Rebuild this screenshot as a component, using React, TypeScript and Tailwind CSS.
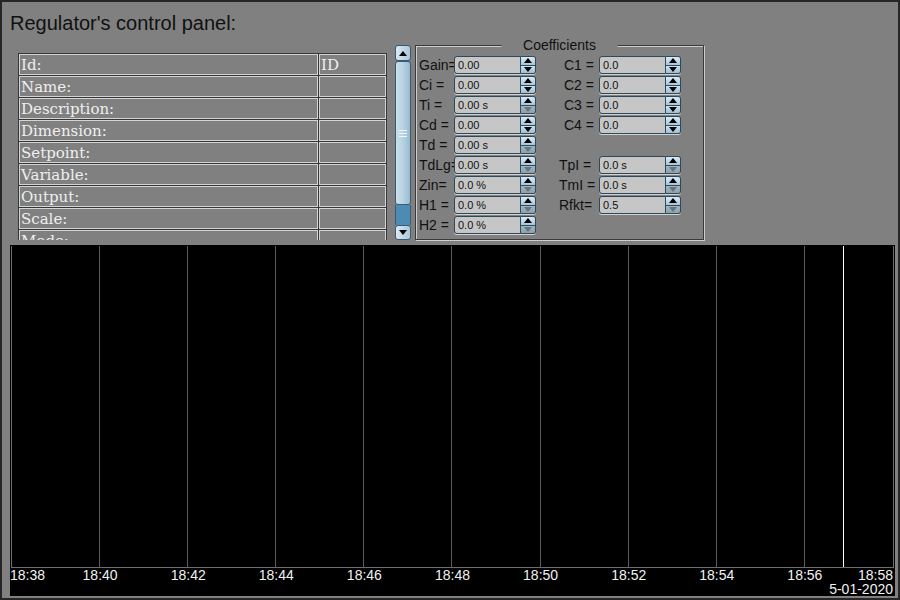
import React from "react";

const fields = ["Id:", "Name:", "Description:", "Dimension:", "Setpoint:", "Variable:", "Output:", "Scale:", "Mode:", "Status:"];

type Row = {
  l: string;
  lv: string;
  lOff?: boolean;
  r?: string;
  rv?: string;
  rOff?: boolean;
  rShift?: boolean;
};

const coeffs: Row[] = [
  { l: "Gain=", lv: "0.00", r: "C1 =", rv: "0.0" },
  { l: "Ci =", lv: "0.00", r: "C2 =", rv: "0.0" },
  { l: "Ti =", lv: "0.00 s", lOff: true, r: "C3 =", rv: "0.0" },
  { l: "Cd =", lv: "0.00", r: "C4 =", rv: "0.0" },
  { l: "Td =", lv: "0.00 s", lOff: true },
  { l: "TdLg=", lv: "0.00 s", lOff: true, r: "TpI =", rv: "0.0 s", rOff: true, rShift: true },
  { l: "Zin=", lv: "0.0 %", lOff: true, r: "TmI =", rv: "0.0 s", rOff: true, rShift: true },
  { l: "H1 =", lv: "0.0 %", lOff: true, r: "Rfkt=", rv: "0.5", rOff: true, rShift: true },
  { l: "H2 =", lv: "0.0 %", lOff: true },
];

const times = ["18:38", "18:40", "18:42", "18:44", "18:46", "18:48", "18:50", "18:52", "18:54", "18:56"];

function Tri({ up, color }: { up?: boolean; color: string }) {
  return (
    <svg width="8" height="5" viewBox="0 0 8 5" className="block">
      <polygon points={up ? "0,5 4,0 8,5" : "0,0 8,0 4,5"} fill={color} />
    </svg>
  );
}

function Spin({ value, downOff }: { value: string; downOff?: boolean }) {
  return (
    <div className="relative flex h-[18px] w-[82px] rounded-[3px] shadow-[0_1px_0_#d2d2d2]">
      <div className="flex flex-1 items-center rounded-l-[3px] border border-[#2c4a5b] bg-[#c6c6c6] pl-[3px] text-[11px] leading-none text-[#111]">
        {value}
      </div>
      <div className="flex w-[15px] flex-col overflow-hidden rounded-r-[3px] border border-l-0 border-[#2c4a5b]">
        <div className="flex flex-1 items-center justify-center border-b border-[#2c4a5b] bg-gradient-to-b from-[#dcebf4] to-[#a6c6da]">
          <Tri up color="#000" />
        </div>
        {downOff ? (
          <div className="flex flex-1 items-center justify-center bg-gradient-to-b from-[#a4b6c0] to-[#8ba1ad]">
            <Tri color="#66747c" />
          </div>
        ) : (
          <div className="flex flex-1 items-center justify-center bg-gradient-to-b from-[#cfe3ef] to-[#9dbfd4]">
            <Tri color="#000" />
          </div>
        )}
      </div>
    </div>
  );
}

function ScrollBar() {
  return (
    <div className="flex h-full w-[16px] flex-col">
      <div className="flex h-[16px] items-center justify-center rounded-[3px] border border-[#3a5b6f] bg-gradient-to-r from-[#dbeaf3] to-[#a8c8dc]">
        <Tri up color="#000" />
      </div>
      <div className="flex flex-1 flex-col">
        <div className="flex h-[144px] items-center justify-center rounded-[3px] border border-[#3a5b6f] bg-gradient-to-r from-[#c9dfeb] via-[#b7d2e2] to-[#98bbd1]">
          <div className="flex w-[8px] flex-col gap-[2px]">
            <div className="h-px bg-[#f4f8fb]" />
            <div className="h-px bg-[#f4f8fb]" />
            <div className="h-px bg-[#f4f8fb]" />
          </div>
        </div>
        <div className="flex-1 border-x border-[#3a5b6f] bg-[#4c8bb3]" />
      </div>
      <div className="flex h-[15px] items-center justify-center rounded-[3px] border border-[#3a5b6f] bg-gradient-to-r from-[#dbeaf3] to-[#a8c8dc]">
        <Tri color="#000" />
      </div>
    </div>
  );
}

export default function App() {
  return (
    <div className="flex h-[600px] w-[900px] flex-col border-2 border-[#262626] bg-[#808080] font-['Liberation_Sans',Arial,sans-serif]">
      <div className="pl-[8px] pt-[10px] text-[20px] leading-[23px] text-[#111]">Regulator's control panel:</div>

      <div className="ml-[16px] mt-[10px] flex h-[195px] shrink-0">
        <div className="h-full w-[369px] overflow-hidden pt-[8px]">
          <div className="flex flex-col gap-px bg-[#363636] p-px font-['DejaVu_Serif',serif] text-[15px] leading-[20px] text-[#efefef]">
            {fields.map((f, i) => (
              <div key={f} className="flex gap-px">
                <div className="h-[21px] w-[299px] border border-[#d4d4d4] bg-[#808080] pl-px">{f}</div>
                <div className="h-[21px] w-[67px] border border-[#d4d4d4] bg-[#808080] pl-px">{i === 0 ? "ID" : ""}</div>
              </div>
            ))}
          </div>
        </div>

        <div className="ml-[8px] h-full">
          <ScrollBar />
        </div>

        <div className="relative ml-[4px] h-[195px] w-[289px] border border-[#3a3a3a] pl-[3px] pt-[10px] shadow-[inset_1px_1px_0_#cdcdcd,1px_1px_0_#cdcdcd]">
          <span className="absolute -top-[9px] left-1/2 -translate-x-1/2 bg-[#808080] px-[22px] text-[14px] leading-[16px] text-[#111]">
            Coefficients
          </span>
          <div className="flex flex-col gap-[2px] text-[14px] text-[#111]">
            {coeffs.map((c) => (
              <div key={c.l} className="flex h-[18px] items-center">
                <span className="w-[35px] whitespace-nowrap leading-[18px]">{c.l}</span>
                <Spin value={c.lv} downOff={c.lOff} />
                {c.r ? (
                  <>
                    <span className={c.rShift ? "ml-[23px] w-[40px] whitespace-nowrap leading-[18px]" : "ml-[28px] w-[35px] whitespace-nowrap leading-[18px]"}>
                      {c.r}
                    </span>
                    <Spin value={c.rv ?? ""} downOff={c.rOff} />
                  </>
                ) : null}
              </div>
            ))}
          </div>
        </div>
      </div>

      <div className="ml-[8px] mt-[5px] flex h-[351px] w-[885px] shrink-0 flex-col bg-black px-px pt-px">
        <div className="relative grid h-[322px] shrink-0 grid-cols-10 border-x border-b border-[#6e6e6e]">
          {times.map((t, i) => (
            <div key={t} className={i < 9 ? "border-r border-[#5c5c5c]" : ""} />
          ))}
          <div className="absolute bottom-0 left-[831px] top-0 w-px bg-white" />
        </div>
        <div className="grid grid-cols-10 px-px text-[14px] leading-[14px] whitespace-nowrap text-[#f2f2f2]">
          {times.map((t, i) =>
            i === 0 ? (
              <div key={t}>
                <span className="-ml-[2px] block">{t}</span>
              </div>
            ) : i < 9 ? (
              <div key={t}>
                <span className="inline-block -translate-x-1/2">{t}</span>
              </div>
            ) : (
              <div key={t} className="flex">
                <div className="w-0">
                  <span className="inline-block -translate-x-1/2">{t}</span>
                </div>
                <div className="ml-auto flex shrink-0 flex-col items-end">
                  <span>18:58</span>
                  <span>5-01-2020</span>
                </div>
              </div>
            )
          )}
        </div>
      </div>
    </div>
  );
}
